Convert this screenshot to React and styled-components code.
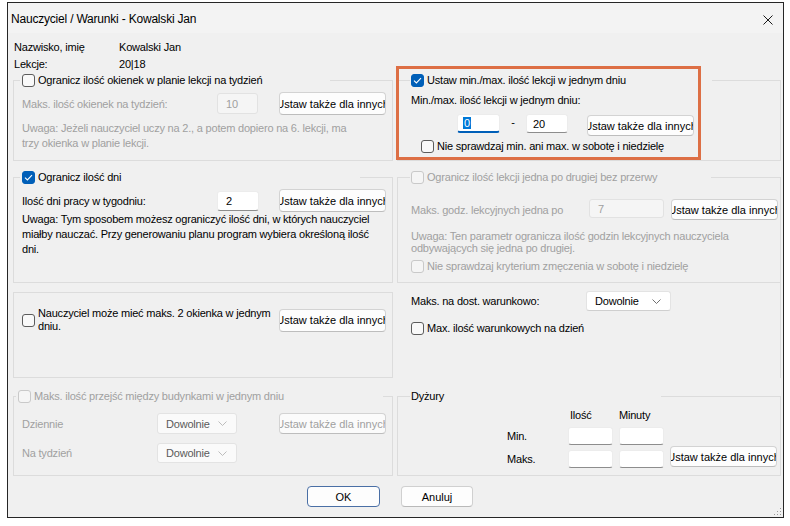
import React from 'react';
import styled, { createGlobalStyle } from 'styled-components';

const GlobalStyle = createGlobalStyle`
  html, body { margin: 0; padding: 0; background: #ffffff; }
  body {
    font-family: "Liberation Sans", Arial, sans-serif;
    font-size: 11px;
    letter-spacing: -0.2px;
    color: #000;
  }
  * { box-sizing: border-box; }
`;

const Window = styled.div`
  position: relative;
  width: 777px;
  height: 516px;
  margin: 2px 0 0 7px;
  border: 1px solid #262626;
  background: #f0f0f0;
  display: flex;
  flex-direction: column;
`;

const TitleBar = styled.div`
  height: 30px;
  flex: none;
  display: flex;
  align-items: center;
  justify-content: space-between;
  padding: 0 10px 0 3px;
  background: #f3f3f3;
`;

const TitleText = styled.div`
  font-size: 12px;
  letter-spacing: -0.2px;
  padding-top: 1px;
`;

const CloseIcon = styled.svg`
  display: block;
  margin-top: 4px;
`;

const Info = styled.div`
  display: grid;
  grid-template-columns: 105px auto;
  grid-auto-rows: 17px;
  align-items: center;
  padding: 5px 0 0 6px;
`;

const Groups = styled.div`
  display: grid;
  grid-template-columns: 380px 384px;
  grid-template-rows: 88px 113px 86px 89px;
  column-gap: 4px;
  row-gap: 9px;
  margin: 1px 0 0 5px;
`;

const Group = styled.fieldset`
  position: relative;
  margin: ${p => (p.$shift ? '2px 0 0 0' : '0')};
  height: ${p => (p.$shift ? 'calc(100% - 2px)' : '100%')};
  min-width: 0;
  border: 1px solid #dcdcdc;
  padding: ${p => p.$pt || 0}px ${p => p.$pr}px 0 ${p => p.$pl}px;
`;

const Panel = styled.div`
  margin-top: -10px;
  padding: 9px 0 0 14px;
  border-right: 1px solid #dcdcdc;
`;

const Legend = styled.legend`
  display: flex;
  align-items: center;
  height: 14px;
  width: ${p => p.$w}px;
  margin-left: ${p => p.$ml ?? -2}px;
  padding: 0 0 0 ${p => p.$pl ?? 2}px;
  color: ${p => (p.$muted ? '#a0a0a0' : '#000')};
`;

const CheckLabel = styled.label`
  display: flex;
  align-items: center;
  gap: 3px;
  margin: ${p => p.$m || '0'};
  color: ${p => (p.$muted ? '#a0a0a0' : '#000')};
  line-height: 13px;
`;

const Box = styled.span`
  flex: none;
  width: 13px;
  height: 13px;
  border-radius: 3px;
  display: flex;
  align-items: center;
  justify-content: center;
  border: 1px solid ${p => (p.$checked ? '#005fb8' : p.$disabled ? '#c9c9c9' : '#5c5c5c')};
  background: ${p => (p.$checked ? '#005fb8' : p.$disabled ? '#f5f5f5' : '#f9f9f9')};
`;

const Row = styled.div`
  display: flex;
  align-items: center;
  height: ${p => p.$h || 21}px;
  margin-top: ${p => p.$mt || 0}px;
  padding-left: ${p => p.$pl || 0}px;
`;

const FieldLabel = styled.span`
  flex: none;
  width: ${p => p.$w}px;
  white-space: nowrap;
  color: ${p => (p.$muted ? '#a0a0a0' : '#000')};
`;

const TextInput = styled.div`
  flex: none;
  width: ${p => p.$w}px;
  height: ${p => p.$h || 20}px;
  display: flex;
  align-items: center;
  padding-left: ${p => p.$pad ?? 8}px;
  background: ${p => (p.$disabled ? '#f5f5f5' : '#ffffff')};
  border: 1px solid ${p => (p.$disabled ? '#e2e2e2' : '#ececec')};
  border-bottom: ${p =>
    p.$focused ? '2px solid #005fb8' : p.$disabled ? '1px solid #e2e2e2' : '1px solid #8d8d8d'};
  border-radius: 3px;
  color: ${p => (p.$disabled ? '#a0a0a0' : '#000')};
  align-self: ${p => p.$self || 'auto'};
`;

const Selection = styled.span`
  background: #0078d7;
  color: #ffffff;
  padding: 0 1px;
`;

const Btn = styled.div`
  flex: none;
  width: ${p => p.$w || 107}px;
  height: ${p => p.$h || 23}px;
  margin-left: ${p => p.$ml ?? 'auto'};
  display: flex;
  align-items: center;
  justify-content: center;
  overflow: hidden;
  white-space: nowrap;
  letter-spacing: 0;
  background: ${p => (p.$disabled ? '#fbfbfb' : '#fdfdfd')};
  border: 1px solid #d3d3d3;
  border-bottom-color: #bdbdbd;
  border-radius: 4px;
  color: ${p => (p.$disabled ? '#a0a0a0' : '#000')};
  align-self: ${p => p.$self || 'auto'};
  margin-top: ${p => p.$mt || 0}px;
`;

const SelectBox = styled.div`
  flex: none;
  width: ${p => p.$w}px;
  height: ${p => p.$h || 21}px;
  display: flex;
  align-items: center;
  justify-content: space-between;
  padding: 0 9px 0 8px;
  background: ${p => (p.$disabled ? '#fafafa' : '#ffffff')};
  border: 1px solid #e3e3e3;
  border-bottom-color: ${p => (p.$disabled ? '#e3e3e3' : '#cfcfcf')};
  border-radius: 3px;
  color: ${p => (p.$disabled ? '#5a5a5a' : '#000')};
`;

const Note = styled.div`
  margin-top: ${p => p.$mt || 0}px;
  max-width: ${p => (p.$maxw ? `${p.$maxw}px` : 'none')};
  line-height: ${p => p.$lh || 15}px;
  color: ${p => (p.$muted ? '#a0a0a0' : '#000')};
  padding-right: 4px;
`;

const Dash = styled.span`
  width: 26px;
  flex: none;
  text-align: center;
  margin-top: -6px;
`;

const Highlight = styled.div`
  position: absolute;
  left: -2px;
  top: -21px;
  width: 305px;
  height: 94px;
  border: 3px solid #dd6f45;
  pointer-events: none;
`;

const DutyGrid = styled.div`
  display: grid;
  grid-template-columns: 151px 45px 45px 107px;
  grid-template-rows: 15px 18px 18px;
  column-gap: 6px;
  row-gap: 5px;
  align-items: center;
  margin-top: 4px;
`;

const DutyHead = styled.span`
  padding-left: ${p => p.$pl || 0}px;
`;

const DutyLabel = styled.span`
  padding-left: 96px;
`;

const Footer = styled.div`
  display: flex;
  gap: 21px;
  margin-top: 10px;
  padding-left: 299px;
`;

const DialogButton = styled.div`
  width: ${p => p.$w}px;
  height: 21px;
  display: flex;
  align-items: center;
  justify-content: center;
  letter-spacing: 0;
  background: #fdfdfd;
  border: 1px solid ${p => (p.$default ? '#4a6fa5' : '#d0d0d0')};
  border-bottom-color: ${p => (p.$default ? '#4a6fa5' : '#b9b9b9')};
  border-radius: 4px;
`;

const Grip = styled.svg`
  position: absolute;
  right: 1px;
  bottom: 1px;
`;

const Check = ({ checked, disabled }) => (
  <Box $checked={checked} $disabled={disabled}>
    {checked && (
      <svg width="9" height="7" viewBox="0 0 9 7">
        <path d="M1 3.6 L3.4 6 L8 1.2" fill="none" stroke="#ffffff" strokeWidth="1.1" />
      </svg>
    )}
  </Box>
);

const Chevron = ({ color = '#606060' }) => (
  <svg width="9" height="5" viewBox="0 0 9 5">
    <path d="M0.5 0.5 L4.5 4.5 L8.5 0.5" fill="none" stroke={color} strokeWidth="0.9" />
  </svg>
);

const BTN_TEXT = 'Ustaw także dla innych';

export default function App() {
  return (
    <>
      <GlobalStyle />
      <Window>
        <TitleBar>
          <TitleText>Nauczyciel / Warunki - Kowalski Jan</TitleText>
          <CloseIcon width="10" height="10" viewBox="0 0 10 10">
            <path d="M0.5 0.5 L9.5 9.5 M9.5 0.5 L0.5 9.5" stroke="#1a1a1a" strokeWidth="1" />
          </CloseIcon>
        </TitleBar>

        <Info>
          <span>Nazwisko, imię</span>
          <span>Kowalski Jan</span>
          <span>Lekcje:</span>
          <span>20|18</span>
        </Info>

        <Groups>
          {/* Row 1 left */}
          <Group $pl={8} $pr={6}>
            <Legend $w={310}>
              <CheckLabel>
                <Check />
                Ogranicz ilość okienek w planie lekcji na tydzień
              </CheckLabel>
            </Legend>
            <Row $mt={5} $h={23}>
              <FieldLabel $w={195} $muted>Maks. ilość okienek na tydzień:</FieldLabel>
              <TextInput $w={41} $h={21} $disabled>10</TextInput>
              <Btn>{BTN_TEXT}</Btn>
            </Row>
            <Note $mt={6} $maxw={340} $muted>
              Uwaga: Jeżeli nauczyciel uczy na 2., a potem dopiero na 6. lekcji, ma trzy okienka w planie lekcji.
            </Note>
          </Group>

          {/* Row 1 right */}
          <Group $pl={13} $pr={2}>
            <Legend $w={302} $ml={-1} $pl={1}>
              <CheckLabel>
                <Check checked />
                Ustaw min./max. ilość lekcji w jednym dniu
              </CheckLabel>
            </Legend>
            <Note $mt={6}>Min./max. ilość lekcji w jednym dniu:</Note>
            <Row $mt={6} $h={22} $pl={46}>
              <TextInput $w={43} $h={19} $pad={5} $focused $self="flex-start">
                <Selection>0</Selection>
              </TextInput>
              <Dash>-</Dash>
              <TextInput $w={42} $h={19} $pad={6} $self="flex-start">20</TextInput>
              <Btn $ml="19px" $h={21} $self="flex-end">{BTN_TEXT}</Btn>
            </Row>
            <CheckLabel $m="4px 0 0 10px">
              <Check />
              Nie sprawdzaj min. ani max. w sobotę i niedzielę
            </CheckLabel>
            <Highlight />
          </Group>

          {/* Row 2 left */}
          <Group $pl={8} $pr={6}>
            <Legend $w={340}>
              <CheckLabel>
                <Check checked />
                Ogranicz ilość dni
              </CheckLabel>
            </Legend>
            <Row $mt={5} $h={23}>
              <FieldLabel $w={195}>Ilość dni pracy w tygodniu:</FieldLabel>
              <TextInput $w={42} $h={20}>2</TextInput>
              <Btn>{BTN_TEXT}</Btn>
            </Row>
            <Note>
              Uwaga: Tym sposobem możesz ograniczyć ilość dni, w których nauczyciel miałby nauczać. Przy generowaniu planu program wybiera określoną ilość dni.
            </Note>
          </Group>

          {/* Row 2 right */}
          <Group $pl={13} $pr={2}>
            <Legend $w={301} $ml={-1} $pl={1} $muted>
              <CheckLabel $muted>
                <Check disabled />
                Ogranicz ilość lekcji jedna po drugiej bez przerwy
              </CheckLabel>
            </Legend>
            <Row $mt={15} $h={21}>
              <FieldLabel $w={178} $muted>Maks. godz. lekcyjnych jedna po</FieldLabel>
              <TextInput $w={75} $h={19} $disabled $self="flex-start">7</TextInput>
              <Btn $ml="7px" $h={21}>{BTN_TEXT}</Btn>
            </Row>
            <Note $mt={10} $lh={12} $muted>
              Uwaga: Ten parametr ogranicza ilość godzin lekcyjnych nauczyciela odbywających się jedna po drugiej.
            </Note>
            <CheckLabel $m="6px 0 0 0" $muted>
              <Check disabled />
              Nie sprawdzaj kryterium zmęczenia w sobotę i niedzielę
            </CheckLabel>
          </Group>

          {/* Row 3 left */}
          <Group $pl={8} $pr={6} $pt={14}>
            <Row $h={26}>
              <CheckLabel>
                <Check />
                <span>
                  Nauczyciel może mieć maks. 2 okienka w jednym
                  <br />
                  dniu.
                </span>
              </CheckLabel>
              <Btn>{BTN_TEXT}</Btn>
            </Row>
          </Group>

          {/* Row 3 right */}
          <Panel>
            <Row $h={20}>
              <FieldLabel $w={175}>Maks. na dost. warunkowo:</FieldLabel>
              <SelectBox $w={85} $h={20}>
                Dowolnie
                <Chevron />
              </SelectBox>
            </Row>
            <CheckLabel $m="11px 0 0 0">
              <Check />
              Max. ilość warunkowych na dzień
            </CheckLabel>
          </Panel>

          {/* Row 4 left */}
          <Group $pl={8} $pr={6} $shift>
            <Legend $w={367} $ml={-6} $pl={2} $muted>
              <CheckLabel $muted>
                <Check disabled />
                Maks. ilość przejść między budynkami w jednym dniu
              </CheckLabel>
            </Legend>
            <Row $mt={10} $h={21}>
              <FieldLabel $w={135} $muted>Dziennie</FieldLabel>
              <SelectBox $w={80} $h={21} $disabled>
                Dowolnie
                <Chevron color="#b5b5b5" />
              </SelectBox>
              <Btn $h={21} $disabled>{BTN_TEXT}</Btn>
            </Row>
            <Row $mt={9} $h={20}>
              <FieldLabel $w={135} $muted>Na tydzień</FieldLabel>
              <SelectBox $w={80} $h={20} $disabled>
                Dowolnie
                <Chevron color="#b5b5b5" />
              </SelectBox>
            </Row>
          </Group>

          {/* Row 4 right */}
          <Group $pl={13} $pr={2} $shift>
            <Legend $w={251} $ml={-1} $pl={1}>Dyżury</Legend>
            <DutyGrid>
              <span />
              <DutyHead $pl={2}>Ilość</DutyHead>
              <DutyHead $pl={0}>Minuty</DutyHead>
              <span />
              <DutyLabel>Min.</DutyLabel>
              <TextInput $w={45} $h={18} />
              <TextInput $w={45} $h={18} />
              <span />
              <DutyLabel>Maks.</DutyLabel>
              <TextInput $w={45} $h={18} />
              <TextInput $w={45} $h={18} />
              <Btn $ml="0" $h={21} $self="end" style={{ marginBottom: 1 }}>{BTN_TEXT}</Btn>
            </DutyGrid>
          </Group>
        </Groups>

        <Footer>
          <DialogButton $w={73} $default>OK</DialogButton>
          <DialogButton $w={72}>Anuluj</DialogButton>
        </Footer>

        <Grip width="10" height="10" viewBox="0 0 10 10">
          <rect x="8" y="2" width="1" height="1" fill="#9a9a9a" />
          <rect x="5" y="5" width="1" height="1" fill="#9a9a9a" />
          <rect x="8" y="5" width="1" height="1" fill="#9a9a9a" />
          <rect x="2" y="8" width="1" height="1" fill="#9a9a9a" />
          <rect x="5" y="8" width="1" height="1" fill="#9a9a9a" />
          <rect x="8" y="8" width="1" height="1" fill="#9a9a9a" />
        </Grip>
      </Window>
    </>
  );
}
